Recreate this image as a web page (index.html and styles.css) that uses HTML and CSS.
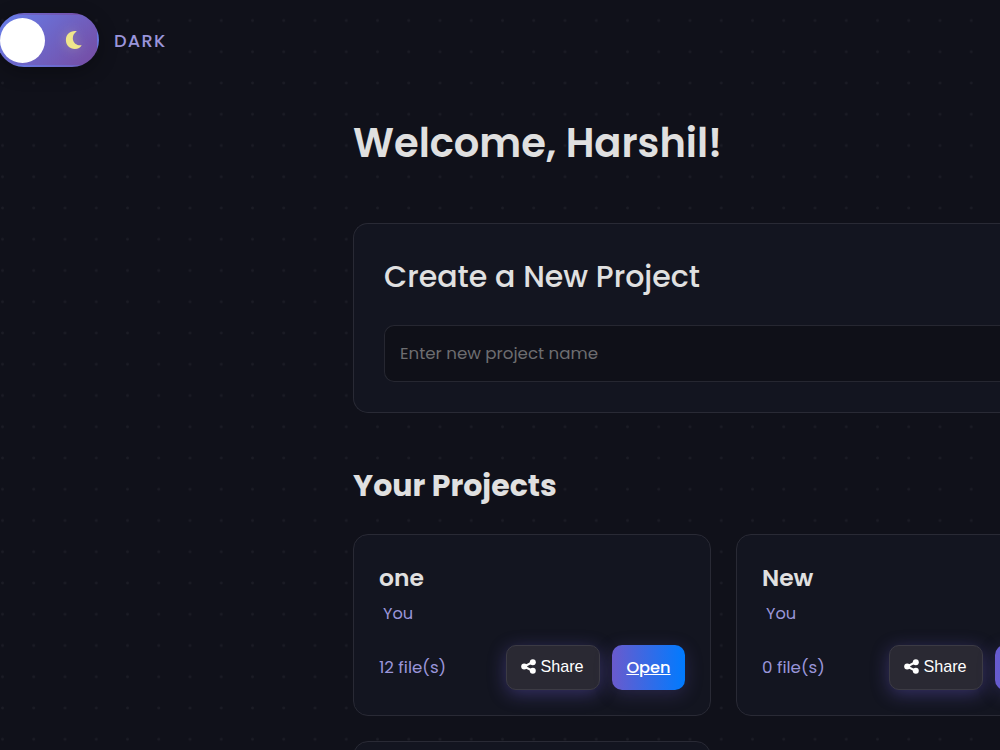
FILE: index.html
```html
<!DOCTYPE html>
<html lang="en">
<head>
<meta charset="utf-8">
<title>Projects</title>
<link rel="stylesheet" href="styles.css">
</head>
<body>
<header class="theme">
  <div class="toggle">
    <span class="knob"></span>
    <svg class="moon" viewBox="0 0 18 20"><path d="M11.800 1.300C5.800.2.9 4.300.9 9.900C.9 15.300 4.900 18.900 9.800 18.900C13.200 18.900 15.500 17.500 16.700 15.200C12 15.800 8.400 13.200 7.900 9.200C7.500 5.800 9 3.200 11.800 1.300Z"/></svg>
  </div>
  <span class="mode">DARK</span>
</header>
<main class="content">
  <h1 class="welcome">Welcome, Harshil!</h1>
  <section class="panel">
    <h2 class="panel-title">Create a New Project</h2>
    <input class="name-input" type="text" placeholder="Enter new project name">
  </section>
  <h2 class="section-title">Your Projects</h2>
  <div class="grid">
    <article class="card">
      <h3 class="card-title">one</h3>
      <p class="owner">You</p>
      <div class="card-foot">
        <span class="files">12 file(s)</span>
        <button class="share"><svg class="share-icon" viewBox="0 0 15 15"><path d="M12 3 3 7.500 12 12" fill="none" stroke="#fff" stroke-width="2"/><circle cx="11.800" cy="3.200" r="3" /><circle cx="3.200" cy="7.500" r="3"/><circle cx="11.800" cy="11.800" r="3"/></svg>Share</button>
        <a class="open" href="#">Open</a>
      </div>
    </article>
    <article class="card">
      <h3 class="card-title">New</h3>
      <p class="owner">You</p>
      <div class="card-foot">
        <span class="files">0 file(s)</span>
        <button class="share"><svg class="share-icon" viewBox="0 0 15 15"><path d="M12 3 3 7.500 12 12" fill="none" stroke="#fff" stroke-width="2"/><circle cx="11.800" cy="3.200" r="3" /><circle cx="3.200" cy="7.500" r="3"/><circle cx="11.800" cy="11.800" r="3"/></svg>Share</button>
        <a class="open" href="#" aria-label="Open"></a>
      </div>
    </article>
    <article class="card"></article>
  </div>
</main>
</body>
</html>
```
FILE: styles.css
```css
* { box-sizing: border-box; }
html { height: 100%; overflow: hidden; }
body {
  margin: 0;
  height: 750px;
  overflow: hidden;
  color: #e0e0e0;
  font-family: Poppins, Inter, "Liberation Sans", sans-serif;
  background-color: #10111a;
  background-image: radial-gradient(circle at 2.5px 20.5px, #1d1e27 0, #1a1b24 1px, transparent 1.9px);
  background-size: 31.25px 31.25px;
}
h1, h2, h3, p { margin: 0; white-space: nowrap; }
.theme { display: flex; align-items: center; gap: 15px; height: 81px; }
.toggle {
  display: flex;
  align-items: center;
  width: 102px;
  height: 54px;
  margin: -1px 0 0 -3px;
  padding: 0 13px 0 1px;
  border: 2px solid transparent;
  border-radius: 27px;
  background: linear-gradient(135deg, #667eea 0%, #764ba2 100%);
  box-shadow: 0 5px 19px rgba(0, 0, 0, .3);
}
.knob { flex: none; width: 45px; height: 45px; border-radius: 50%; background: #fff; }
.moon { flex: none; width: 18px; height: 20px; margin: -1px 0 0 20px; fill: #f0e68c; filter: drop-shadow(0 0 6px rgba(240, 230, 140, .3)); }
.mode { margin-top: -1px; color: #9a95da; font-size: 17.8px; font-weight: 500; letter-spacing: 1.25px; }
.content { width: 647px; margin-left: 353px; }
.welcome { height: 142px; padding-top: 32px; font-size: 40px; line-height: 60px; font-weight: 600; }
.panel { height: 190px; padding: 30px 0 30px 30px; border: 1px solid #292a35; border-right: 0; border-radius: 15px 0 0 15px; background: #131520; }
.panel-title { height: 71px; font-size: 30px; line-height: 46px; font-weight: 500; }
.name-input {
  display: block;
  width: 100%;
  height: 57px;
  padding: 0 15px 2px;
  border: 1px solid #262731;
  border-right: 0;
  border-radius: 10px 0 0 10px;
  background: #0f1018;
  color: #e0e0e0;
  font: inherit;
  font-size: 16.67px;
}
.name-input::placeholder { color: #6d6d70; }
.section-title { height: 121px; padding-top: 49px; font-size: 30px; line-height: 48px; font-weight: 700; }
.grid { display: grid; grid-template-columns: repeat(2, 358px); grid-auto-rows: 182px; gap: 25px; }
.card { padding: 25px; border: 1px solid #292a35; border-radius: 15px; background: #131520; }
.card-title { height: 37px; font-size: 23.4px; line-height: 36px; font-weight: 600; }
.owner { height: 48px; padding: 3px 0 0 4px; color: #9a95da; font-size: 16.2px; line-height: 28px; }
.card-foot { display: flex; align-items: center; height: 45px; }
.files { flex: 1; padding-bottom: 2px; color: #9a95da; font-size: 16.67px; }
.share {
  display: flex;
  align-items: center;
  justify-content: center;
  width: 94px;
  height: 45px;
  margin-right: 12px;
  padding: 0 1px 2px 0;
  gap: 4px;
  border: 1px solid #3c3b44;
  border-radius: 10px;
  background: #2a2933;
  color: #fff;
  font-family: "Liberation Sans", Arial, sans-serif;
  font-size: 16.2px;
  box-shadow: 0 4px 18px rgba(106, 90, 205, .4);
}
.share-icon { width: 15px; height: 15px; fill: #fff; }
.open {
  width: 73px;
  height: 45px;
  border-radius: 10px;
  background: linear-gradient(90deg, #6a5acd, #007bff);
  color: #fff;
  font-size: 16.2px;
  line-height: 45px;
  font-weight: 500;
  text-align: center;
  box-shadow: 0 4px 18px rgba(106, 90, 205, .25);
}
```
